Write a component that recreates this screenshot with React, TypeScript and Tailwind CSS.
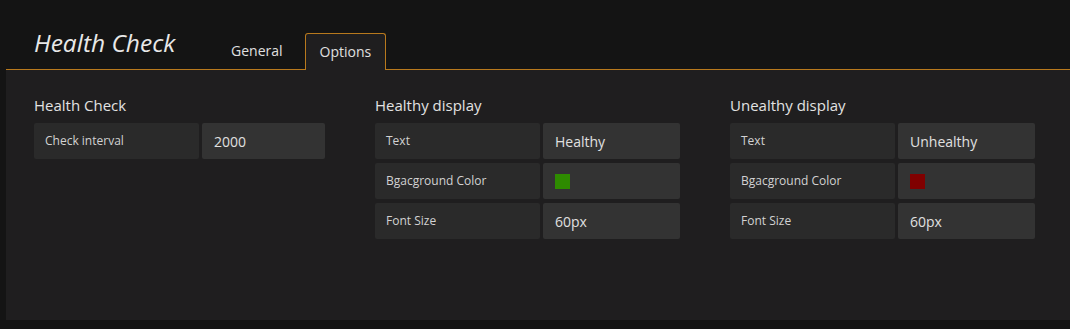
import React from "react";

const font = { fontFamily: '"Open Sans", "Noto Sans", sans-serif' };

type Row = { label: string; value?: string; swatch?: string };

function Section({
  title,
  rows,
  width,
  valueW,
}: {
  title: string;
  rows: Row[];
  width: string;
  valueW: string;
}) {
  return (
    <div className={width}>
      <div className="text-[15px] leading-[20px] text-[#e2e2e2] mb-[8px]">{title}</div>
      <div className="flex flex-col gap-[4px]">
        {rows.map((r) => (
          <div key={r.label} className="flex gap-[3px] h-[36px]">
            <div className="w-[165px] bg-[#2a2a2a] rounded-[2px] flex items-center pl-[11px] text-[12px] text-[#d2d2d2]">
              {r.label}
            </div>
            <div
              className={`${valueW} bg-[#333333] rounded-[2px] flex items-center pl-[12px] text-[14px] text-[#e0e0e0]`}
            >
              {r.swatch ? (
                <span className="block w-[15px] h-[15px]" style={{ backgroundColor: r.swatch }} />
              ) : (
                r.value
              )}
            </div>
          </div>
        ))}
      </div>
    </div>
  );
}

export default function App() {
  return (
    <div className="w-[1070px] h-[329px] bg-[#141414] overflow-hidden" style={font}>
      <div className="pl-[6px]">
        <div className="flex items-start h-[70px] -mb-px relative z-10">
          <div className="w-[210px] pl-[28px] mt-[31px] text-[24.5px] leading-[24px] italic text-[#e8e8e8]">
            Health Check
          </div>
          <div className="mt-[32px] h-[37px] border border-transparent px-[14px] pt-[8px] text-[14px] leading-[20px] text-[#e0e0e0]">
            General
          </div>
          <div className="ml-[7px] mt-[33px] h-[37px] border border-b-0 border-[#b8791d] rounded-t-[3px] bg-[#1f1e1f] px-[14px] pt-[8px] text-[14px] leading-[20px] text-[#e0e0e0]">
            Options
          </div>
        </div>
        <div className="h-[251px] border-t border-[#b8791d] bg-[#1f1e1f] pl-[28px] pt-[25px] flex">
          <Section
            title="Health Check"
            width="w-[341px]"
            valueW="w-[123px]"
            rows={[{ label: "Check interval", value: "2000" }]}
          />
          <Section
            title="Healthy display"
            width="w-[355px]"
            valueW="w-[137px]"
            rows={[
              { label: "Text", value: "Healthy" },
              { label: "Bgacground Color", swatch: "#2e8b00" },
              { label: "Font Size", value: "60px" },
            ]}
          />
          <Section
            title="Unealthy display"
            width="w-[340px]"
            valueW="w-[137px]"
            rows={[
              { label: "Text", value: "Unhealthy" },
              { label: "Bgacground Color", swatch: "#800000" },
              { label: "Font Size", value: "60px" },
            ]}
          />
        </div>
      </div>
    </div>
  );
}
